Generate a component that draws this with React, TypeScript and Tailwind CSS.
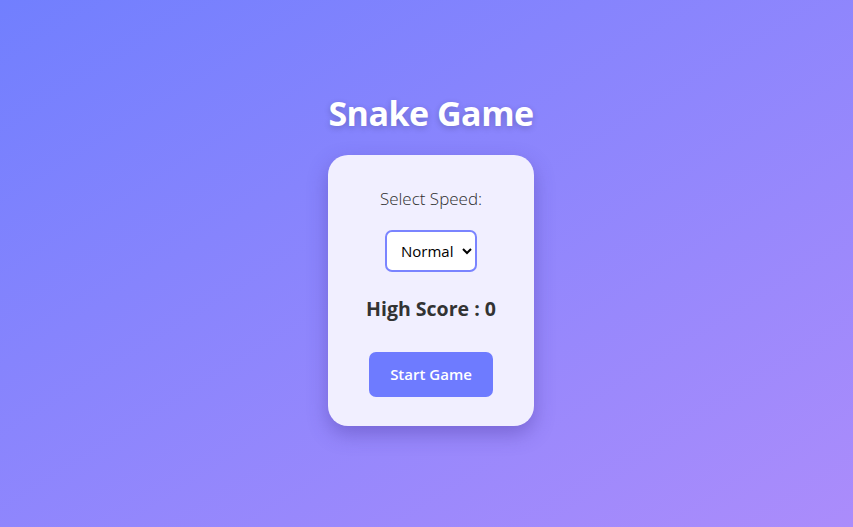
export default function App() {
  return (
    <div className="flex min-h-[527px] w-full flex-col items-center bg-gradient-to-br from-[#717ffe] to-[#ab8cfb] pl-[9px] font-['Open_Sans',sans-serif]">
      <h1 className="mt-[91px] text-[34px] font-bold leading-[44px] tracking-[-0.5px] text-white [text-shadow:0_2px_6px_rgba(0,0,0,0.2)]">
        Snake Game
      </h1>
      <div className="mt-[20px] flex h-[271px] w-[206px] flex-col items-center rounded-[20px] bg-[#f1efff] shadow-[0_8px_20px_rgba(60,40,140,0.35)]">
        <p className="mt-[32px] text-[17px] font-light leading-[24px] text-[#2e2e2e]">Select Speed:</p>
        <select
          defaultValue="normal"
          className="mt-[19px] h-[42px] w-[92px] rounded-[7px] border-2 border-[#7a84ff] bg-white pl-[10px] text-[15px] text-black"
        >
          <option value="slow">Slow</option>
          <option value="normal">Normal</option>
          <option value="fast">Fast</option>
        </select>
        <p className="mt-[23px] text-[19.5px] font-bold leading-[28px] text-[#333]">High Score : 0</p>
        <button className="mt-[29px] h-[45px] w-[124px] rounded-[7px] bg-[#6e7bff] text-[15px] font-semibold text-white">
          Start Game
        </button>
      </div>
    </div>
  );
}
